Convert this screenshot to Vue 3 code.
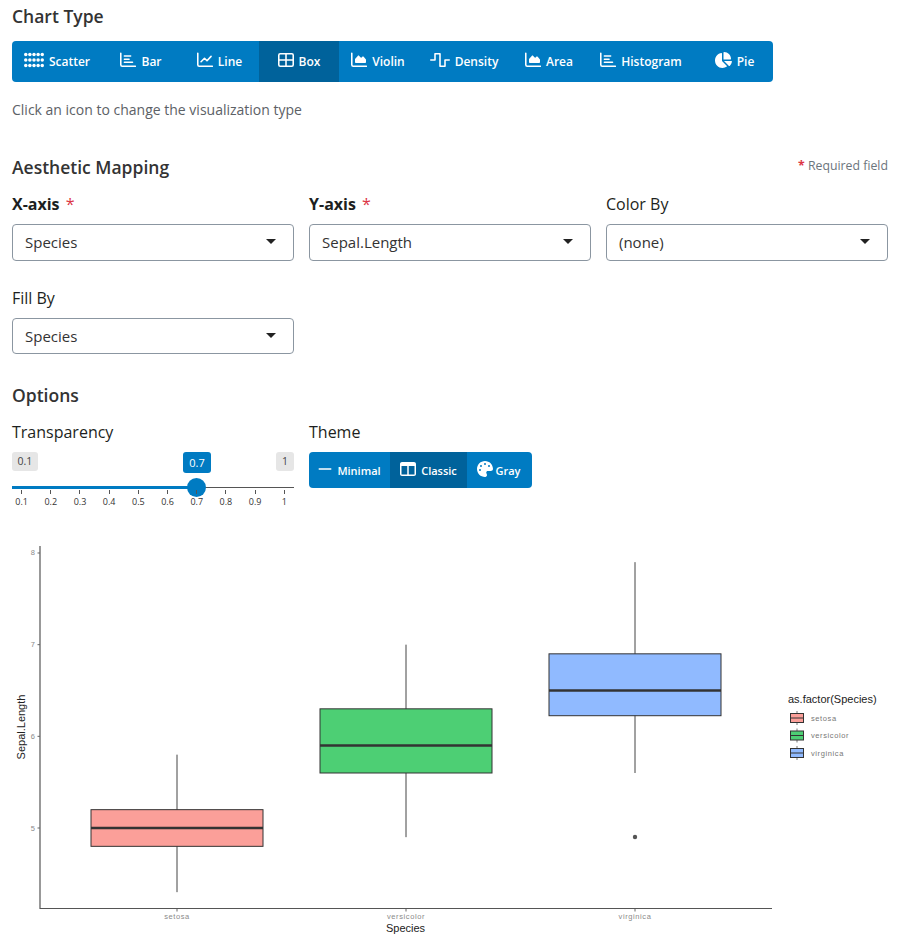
<script setup>
const P = {
  bar: { w: 512, sw: 50, d: 'M25 40V410Q25 458 70 458H490M140 130H340M140 230H290M140 330H400' },
  line: { w: 512, sw: 50, d: 'M25 40V410Q25 458 70 458H490M130 310L240 200L320 280L450 140' },
  box: { w: 512, sw: 50, d: 'M70 54H442Q487 54 487 102V410Q487 458 442 458H70Q25 458 25 410V102Q25 54 70 54ZM256 54V458M25 256H487' },
  area: {
    w: 512,
    sw: 50,
    d: 'M25 40V410Q25 458 70 458H490',
    fill: 'M160 352H448c17.7 0 32-14.3 32-32V251.8c0-7.6-2.7-15-7.7-20.8l-65.8-76.8c-12.1-14.2-33.7-15-46.9-1.8l-21 21c-10 10-26.4 9.2-35.4-1.6l-39.2-47c-12.6-15.1-35.7-15.4-48.7-.6L135.900 215c-5.100 5.800-7.900 13.300-7.900 21.100v84c0 17.700 14.300 32 32 32z',
  },
  wave: { w: 640, sw: 50, d: 'M25 256H160V54H320V458H480V256H615' },
  pie: { w: 576, fill: 'M304 240V16.6c0-9 7-16.6 16-16.6C443.7 0 544 100.3 544 224c0 9-7.6 16-16.6 16H304zM32 272C32 150.7 122.1 50.3 239 34.3c9.2-1.3 17 6.1 17 15.4V288L412.5 444.5c6.7 6.7 6.2 17.7-1.5 23.1C371.8 495.6 323.8 512 272 512C139.5 512 32 404.6 32 272zm526.4 16c9.3 0 16.6 7.8 15.4 17c-7.7 55.9-34.6 105.6-73.9 142.3c-6 5.6-15.4 5.2-21.2-.7L320 288H558.4z' },
  minus: { w: 448, sw: 48, d: 'M40 256H408' },
  columns: { w: 512, fill: 'M0 96C0 60.7 28.7 32 64 32H448c35.3 0 64 28.7 64 64V416c0 35.3-28.700 64-64 64H64c-35.3 0-64-28.700-64-64V96zm48 64V432H232V160H48zm416 0H280V432H464V160z' },
  palette: { w: 512, fill: 'M512 256c0 .9 0 1.8 0 2.7c-.4 36.5-33.6 61.3-70.1 61.3H344c-26.5 0-48 21.5-48 48c0 3.4 .4 6.7 1 9.9c2.1 10.2 6.5 20 10.8 29.9c6.1 13.8 12.1 27.5 12.1 42c0 31.8-21.6 60.7-53.4 62c-3.5 .1-7 .2-10.6 .2C114.6 512 0 397.4 0 256S114.6 0 256 0S512 114.6 512 256zM128 288a32 32 0 1 0 -64 0 32 32 0 1 0 64 0zm0-96a32 32 0 1 0 0-64 32 32 0 1 0 0 64zM288 96a32 32 0 1 0 -64 0 32 32 0 1 0 64 0zm96 96a32 32 0 1 0 0-64 32 32 0 1 0 0 64z' },
}
const braille = []
for (const x of [56, 188, 320, 452, 584]) for (const y of [80, 256, 432]) braille.push({ x, y })

const chartTypes = [
  { label: 'Scatter', icon: 'braille' },
  { label: 'Bar', icon: 'bar' },
  { label: 'Line', icon: 'line' },
  { label: 'Box', icon: 'box', active: true },
  { label: 'Violin', icon: 'area' },
  { label: 'Density', icon: 'wave' },
  { label: 'Area', icon: 'area' },
  { label: 'Histogram', icon: 'bar' },
  { label: 'Pie', icon: 'pie' },
]
const themes = [
  { label: 'Minimal', icon: 'minus' },
  { label: 'Classic', icon: 'columns', active: true },
  { label: 'Gray', icon: 'palette' },
]
const row1 = [
  { label: 'X-axis', req: true, value: 'Species' },
  { label: 'Y-axis', req: true, value: 'Sepal.Length' },
  { label: 'Color By', value: '(none)' },
]
const ticks = ['0.1', '0.2', '0.3', '0.4', '0.5', '0.6', '0.7', '0.8', '0.9', '1']

const y = (v) => 828 - (v - 5) * 91.67
const boxes = [
  { name: 'setosa', x: 91, fill: '#fb9f99', lo: 4.3, q1: 4.8, med: 5, q3: 5.2, hi: 5.8 },
  { name: 'versicolor', x: 320, fill: '#4dcf74', lo: 4.9, q1: 5.6, med: 5.9, q3: 6.3, hi: 7 },
  { name: 'virginica', x: 549, fill: '#90baff', lo: 5.6, q1: 6.225, med: 6.5, q3: 6.9, hi: 7.9 },
]
const w = 172
const legendY = [711, 728.5, 746]
</script>

<template>
  <div class="page">
    <h2 class="h first">Chart Type</h2>
    <div class="group chart-group">
      <div v-for="b in chartTypes" :key="b.label" class="btn" :class="{ on: b.active }">
        <svg v-if="b.icon === 'braille'" class="ic" width="20" height="16" viewBox="0 0 640 512" fill="#fff">
          <circle v-for="d in braille" :key="d.x + '-' + d.y" :cx="d.x" :cy="d.y" r="56" />
        </svg>
        <svg v-else class="ic" :width="P[b.icon].w / 32" height="16" :viewBox="`0 0 ${P[b.icon].w} 512`">
          <path v-if="P[b.icon].d" :d="P[b.icon].d" fill="none" stroke="#fff" :stroke-width="P[b.icon].sw" stroke-linecap="round" stroke-linejoin="round" />
          <path v-if="P[b.icon].fill" :d="P[b.icon].fill" fill="#fff" />
        </svg>
        <span>{{ b.label }}</span>
      </div>
    </div>
    <p class="help">Click an icon to change the visualization type</p>

    <div class="map-head">
      <h2 class="h">Aesthetic Mapping</h2>
      <div class="req-note"><span class="star">*</span> Required field</div>
    </div>

    <div class="fields">
      <div v-for="f in row1" :key="f.label" class="field">
        <div class="lab" :class="{ strong: f.req }">{{ f.label }}<span v-if="f.req" class="star big"> *</span></div>
        <div class="sel"><span>{{ f.value }}</span><i class="caret"></i></div>
      </div>
      <div class="field">
        <div class="lab">Fill By</div>
        <div class="sel short"><span>Species</span><i class="caret"></i></div>
      </div>
    </div>

    <h2 class="h opts">Options</h2>
    <div class="fields opt-row">
      <div class="field">
        <div class="lab">Transparency</div>
        <div class="slider">
          <span class="badge min">0.1</span>
          <span class="badge cur">0.7</span>
          <span class="badge max">1</span>
          <div class="track"><div class="fill"></div><div class="thumb"></div></div>
          <div class="scale">
            <div v-for="t in ticks" :key="t" class="tick"><i></i><span>{{ t }}</span></div>
          </div>
        </div>
      </div>
      <div class="field">
        <div class="lab">Theme</div>
        <div class="group theme-group">
          <div v-for="b in themes" :key="b.label" class="btn" :class="{ on: b.active }">
            <svg class="ic" :width="P[b.icon].w / 32" height="16" :viewBox="`0 0 ${P[b.icon].w} 512`">
              <path v-if="P[b.icon].d" :d="P[b.icon].d" fill="none" stroke="#fff" :stroke-width="P[b.icon].sw" stroke-linecap="round" stroke-linejoin="round" />
              <path v-if="P[b.icon].fill" :d="P[b.icon].fill" fill="#fff" />
            </svg>
            <span>{{ b.label }}</span>
          </div>
        </div>
      </div>
    </div>

    <svg class="plot" width="900" height="410" viewBox="0 530 900 410">
      <g stroke="#444" stroke-width="1">
        <line v-for="b in boxes" :key="b.name + 'w'" :x1="b.x + w / 2" :x2="b.x + w / 2" :y1="y(b.lo)" :y2="y(b.hi)" />
      </g>
      <g v-for="b in boxes" :key="b.name">
        <rect :x="b.x" :y="y(b.q3)" :width="w" :height="y(b.q1) - y(b.q3)" :fill="b.fill" stroke="#333" stroke-width="1" />
        <line :x1="b.x" :x2="b.x + w" :y1="y(b.med)" :y2="y(b.med)" stroke="#333" stroke-width="2.500" />
      </g>
      <circle cx="635" cy="837" r="2.200" fill="#555" />

      <path d="M40 546V908.500H772" fill="none" stroke="#555" stroke-width="1.200" />
      <g stroke="#666" stroke-width="1">
        <line v-for="v in [5, 6, 7, 8]" :key="v" x1="37.500" x2="40" :y1="y(v)" :y2="y(v)" />
        <line v-for="b in boxes" :key="b.name + 't'" :x1="b.x + w / 2" :x2="b.x + w / 2" y1="909" y2="911.500" />
      </g>
      <text v-for="v in [5, 6, 7, 8]" :key="v + 'l'" x="35.500" :y="y(v) + 2.500" class="tk" text-anchor="end">{{ v }}</text>
      <text v-for="b in boxes" :key="b.name + 'l'" :x="b.x + w / 2" y="919" class="tk" text-anchor="middle">{{ b.name }}</text>
      <text x="405.500" y="932" class="ax" text-anchor="middle">Species</text>
      <text class="ax" text-anchor="middle" transform="translate(25 727) rotate(-90)">Sepal.Length</text>

      <text x="788" y="703" class="ax">as.factor(Species)</text>
      <g v-for="(b, i) in boxes" :key="b.name + 'k'">
        <line x1="797" x2="797" :y1="legendY[i]" :y2="legendY[i] + 14" stroke="#777" stroke-width="1" />
        <rect x="790.500" :y="legendY[i] + 2.500" width="13" height="9" :fill="b.fill" stroke="#333" stroke-width="1" />
        <line x1="790.500" x2="803.500" :y1="legendY[i] + 7" :y2="legendY[i] + 7" stroke="#333" stroke-width="1" />
        <text x="811" :y="legendY[i] + 9.500" class="tk leg">{{ b.name }}</text>
      </g>
    </svg>
  </div>
</template>

<style>
body { margin: 0; background: #fff; }
</style>

<style scoped>
.page {
  width: 900px;
  height: 940px;
  overflow: hidden;
  box-sizing: border-box;
  padding: 0 12px;
  font-family: "Open Sans", sans-serif;
  color: #1d1f21;
}
.h {
  margin: 0;
  font-size: 17.500px;
  line-height: 22px;
  font-weight: 600;
  color: #333;
}
.first { padding-top: 5px; }
.group {
  display: grid;
  background: #007bc2;
  border-radius: 4px;
  overflow: hidden;
  color: #fff;
  font-size: 12px;
  font-weight: 600;
}
.chart-group {
  margin-top: 14px;
  width: 761px;
  height: 41px;
  grid-template-columns: 90px 78px 79px 80px 78px 94px 76px 108px 78px;
}
.theme-group {
  width: 223px;
  height: 36px;
  grid-template-columns: 81px 77px 65px;
  font-size: 11px;
}
.theme-group .btn:last-child {
  gap: 3px;
  padding-right: 2px;
}
.btn {
  display: flex;
  align-items: center;
  justify-content: center;
  gap: 5px;
}
.btn.on { background: #00629b; }
.ic { flex: none; margin-top: -3px; }
.help {
  margin: 18px 0 0;
  font-size: 14px;
  line-height: 20px;
  color: #5c6166;
}
.map-head {
  margin-top: 36px;
  display: flex;
  justify-content: space-between;
  align-items: flex-start;
}
.req-note {
  font-size: 12.300px;
  line-height: 20px;
  color: #6c757d;
  font-weight: 400;
}
.star { color: #dc3545; font-weight: 700; }
.star.big { font-weight: 400; margin-left: 2px; }
.fields {
  margin-top: 15px;
  display: grid;
  grid-template-columns: repeat(3, 282px);
  column-gap: 15px;
  row-gap: 26px;
}
.lab {
  font-size: 16px;
  line-height: 22px;
  margin-bottom: 9px;
}
.lab.strong { font-weight: 700; }
.sel {
  box-sizing: border-box;
  height: 37px;
  border: 1px solid #8b96a1;
  border-radius: 4px;
  padding: 0 12px 2px;
  display: flex;
  align-items: center;
  justify-content: space-between;
  font-size: 15px;
  color: #333;
}
.sel.short { height: 36px; padding-bottom: 0; }
.caret {
  width: 0;
  height: 0;
  margin: 0 5px 0 0;
  border-left: 5px solid transparent;
  border-right: 5px solid transparent;
  border-top: 5px solid #222;
}
.short .caret { margin-top: -2px; }
.opts { margin-top: 30px; }
.opt-row { margin-top: 15px; }
.slider {
  position: relative;
  height: 50px;
}
.badge {
  position: absolute;
  top: 0;
  height: 19px;
  line-height: 19px;
  border-radius: 3px;
  background: #e6e6e6;
  color: #444;
  font-size: 10.500px;
  text-align: center;
}
.badge.min { left: 0; width: 26px; }
.badge.max { right: 0; width: 18px; }
.badge.cur {
  left: 171px;
  width: 28px;
  height: 21px;
  line-height: 21px;
  background: #007bc2;
  color: #fff;
  font-size: 11px;
}
.track {
  position: absolute;
  left: 0;
  right: 0;
  top: 35px;
  height: 1px;
  background: #555;
}
.fill {
  position: absolute;
  left: 0;
  top: -1px;
  width: 185px;
  height: 3px;
  background: #007bc2;
}
.thumb {
  position: absolute;
  left: 175px;
  top: -9.500px;
  width: 19px;
  height: 19px;
  border-radius: 50%;
  background: #007bc2;
}
.scale {
  position: absolute;
  left: 9.600px;
  right: 9.600px;
  top: 38px;
  display: flex;
  justify-content: space-between;
}
.tick {
  width: 0;
  display: flex;
  flex-direction: column;
  align-items: center;
}
.tick i {
  flex: none;
  width: 1px;
  height: 4px;
  background: #555;
}
.tick span {
  margin-top: 2px;
  font-size: 9px;
  line-height: 12px;
  color: #333;
}
.plot {
  display: block;
  margin: 28px 0 0 -12px;
}
.tk {
  font-family: "Liberation Sans", sans-serif;
  font-size: 7.500px;
  letter-spacing: 0.600px;
  fill: #8a8a8a;
}
.leg { fill: #777; }
.ax {
  font-family: "Liberation Sans", sans-serif;
  font-size: 11px;
  fill: #222;
}
</style>
